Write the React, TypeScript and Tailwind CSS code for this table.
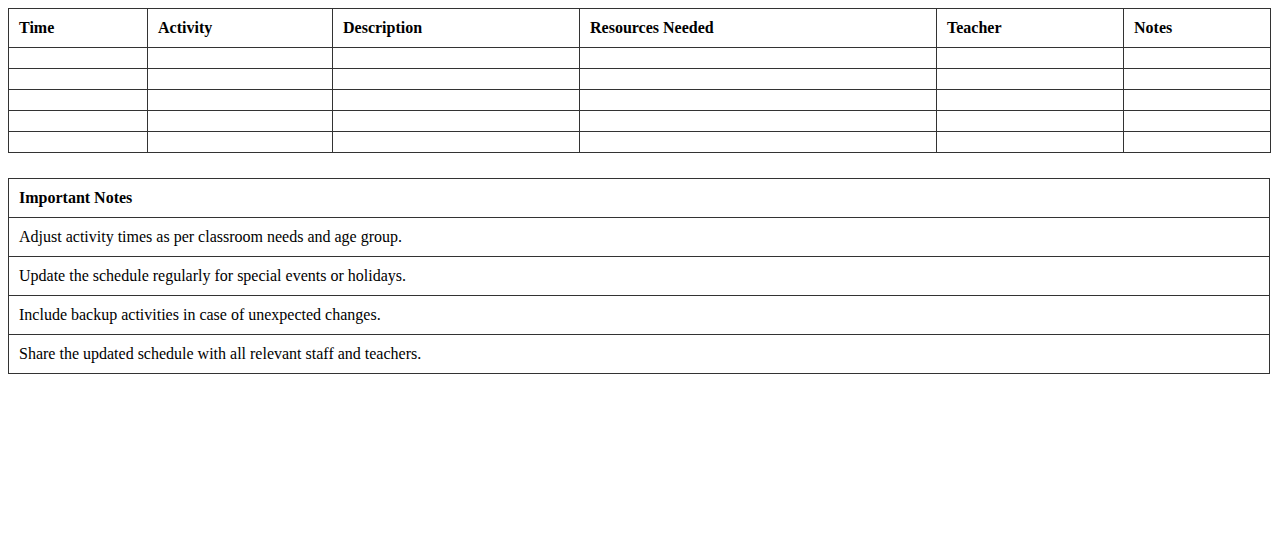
import React from 'react';

const columns = [
  { label: 'Time', width: 139 },
  { label: 'Activity', width: 185 },
  { label: 'Description', width: 247 },
  { label: 'Resources Needed', width: 357 },
  { label: 'Teacher', width: 187 },
  { label: 'Notes', width: 147 },
];

const notes = [
  'Adjust activity times as per classroom needs and age group.',
  'Update the schedule regularly for special events or holidays.',
  'Include backup activities in case of unexpected changes.',
  'Share the updated schedule with all relevant staff and teachers.',
];

export default function App() {
  return (
    <div className="p-2 bg-white text-black font-['Liberation_Serif','Times_New_Roman',serif] text-[16px] leading-[18px] min-h-[550px]">
      {/* Schedule table */}
      <table className="w-full table-fixed border-collapse mb-[25px]">
        <colgroup>
          {columns.map(c => (
            <col key={c.label} style={{ width: c.width }} />
          ))}
        </colgroup>
        <thead>
          <tr>
            {columns.map(c => (
              <th key={c.label} className="border border-[#333] p-[10px] text-left font-bold">
                {c.label}
              </th>
            ))}
          </tr>
        </thead>
        <tbody>
          {[0, 1, 2, 3, 4].map(r => (
            <tr key={r}>
              {columns.map(c => (
                <td key={c.label} className="border border-[#333] p-[10px]"></td>
              ))}
            </tr>
          ))}
        </tbody>
      </table>

      {/* Notes table */}
      <table className="w-full border-collapse">
        <thead>
          <tr>
            <th className="border border-[#333] p-[10px] text-left font-bold">Important Notes</th>
          </tr>
        </thead>
        <tbody>
          {notes.map(n => (
            <tr key={n}>
              <td className="border border-[#333] p-[10px]">{n}</td>
            </tr>
          ))}
        </tbody>
      </table>
    </div>
  );
}
